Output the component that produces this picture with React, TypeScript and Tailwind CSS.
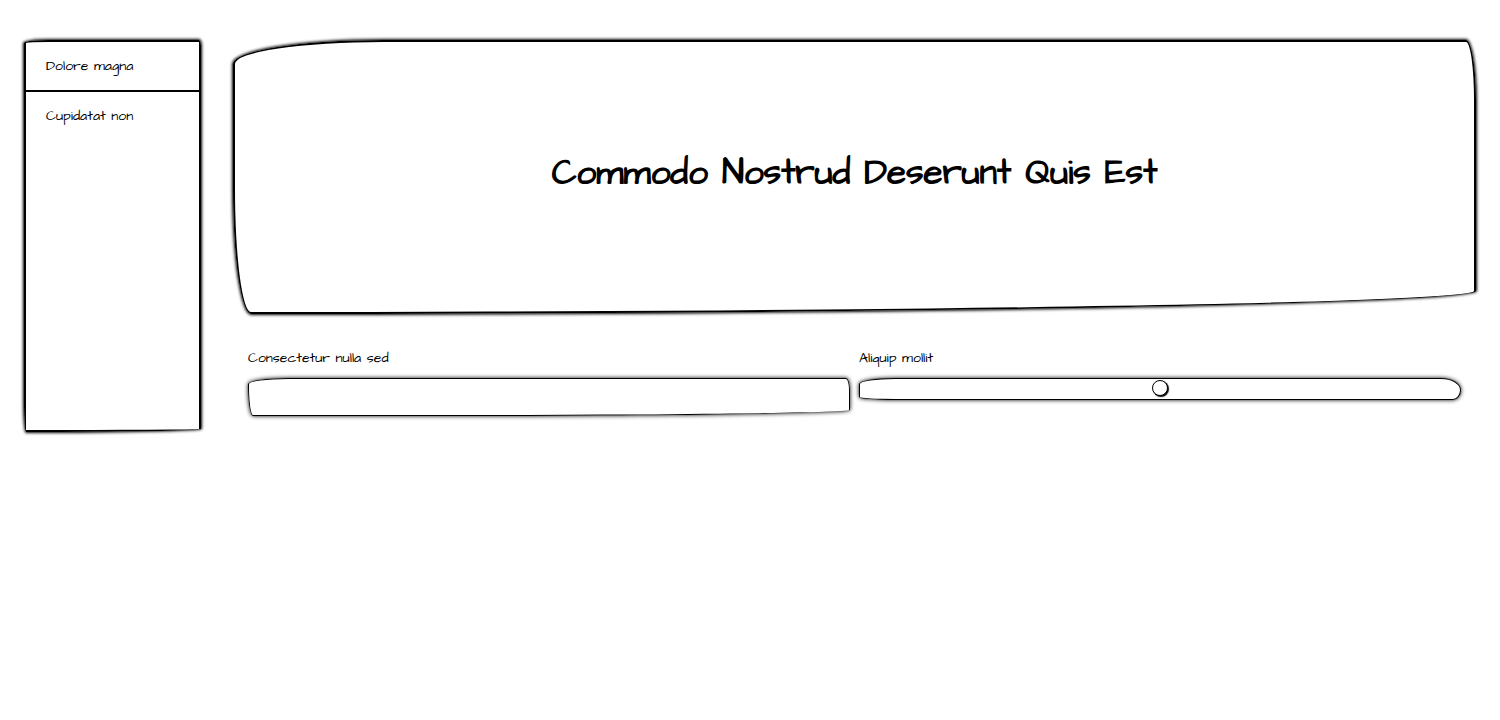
import { useState } from "react";

const links = ["Dolore magna", "Cupidatat non"];

function Sidebar() {
  return (
    <nav className="h-[392px] w-[177px] shrink-0 rounded-[25px_2px_177px_2px/3px_6px_3px_30px] border-2 border-black shadow-[0_0_3px_1px_#000]">
      <ul>
        {links.map((label) => (
          <li key={label} className="border-b-2 border-black last:border-b-0">
            <a href="#" className="block px-5 py-3 text-sm leading-6">
              {label}
            </a>
          </li>
        ))}
      </ul>
    </nav>
  );
}

export default function App() {
  const [text, setText] = useState("");
  const [level, setLevel] = useState(50);

  return (
    <div className="flex items-start gap-8 bg-white px-6 py-10 font-['Architects_Daughter','Open_Sans',sans-serif] text-black">
      <Sidebar />
      <main className="min-w-0 flex-1">
        <header className="flex h-[274px] items-center justify-center rounded-[150px_10px_1225px_18px/24px_60px_23px_125px] border-2 border-black pb-2 shadow-[0_0_3px_1px_#000]">
          <h1 className="text-[35px] leading-12 font-bold">Commodo Nostrud Deserunt Quis Est</h1>
        </header>
        <div className="grid grid-cols-2 items-start gap-[9px] px-[15px] pt-8">
          <div className="flex flex-col gap-2">
            <label htmlFor="sed" className="text-sm leading-6">
              Consectetur nulla sed
            </label>
            <input
              id="sed"
              type="text"
              value={text}
              onChange={(e) => setText(e.target.value)}
              className="h-[38px] w-full rounded-[40px_4px_400px_5px/6px_12px_6px_30px] border border-black px-3 shadow-[0_0_4px_#000] outline-none"
            />
          </div>
          <div className="flex flex-col gap-2">
            <label htmlFor="mollit" className="text-sm leading-6">
              Aliquip mollit
            </label>
            <input
              id="mollit"
              type="range"
              value={level}
              onChange={(e) => setLevel(Number(e.target.value))}
              className="h-[22px] w-full appearance-none rounded-[36px_20px_8px_36px/6px_12px_10px_3px] border border-black bg-white pb-0.5 shadow-[0_0_4px_#000] outline-none [&::-webkit-slider-thumb]:size-4 [&::-webkit-slider-thumb]:appearance-none [&::-webkit-slider-thumb]:rounded-full [&::-webkit-slider-thumb]:border [&::-webkit-slider-thumb]:border-black [&::-webkit-slider-thumb]:bg-white [&::-webkit-slider-thumb]:shadow-[1px_1px_1px_#000]"
            />
          </div>
        </div>
      </main>
    </div>
  );
}
